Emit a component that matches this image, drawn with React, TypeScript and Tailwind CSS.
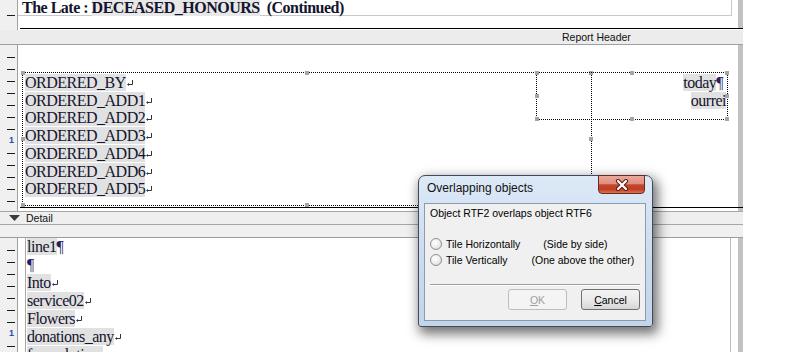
import React from "react";

const SERIF = "font-['Liberation_Serif','Times_New_Roman',serif]";
const SANS = "font-['Liberation_Sans',Arial,sans-serif]";

// left ruler, one tick every 12px, "1" marks one inch from the band
function Ruler({ count, one, pad = "pt-px" }: { count: number; one?: number; pad?: string }) {
  return (
    <div className={`w-[18px] shrink-0 overflow-hidden bg-[#f0f0f0] border-r border-[#a0a0a0] flex flex-col ${pad}`}>
      {Array.from({ length: count }).map((_, i) => (
        <div key={i} className="h-[12px] shrink-0 flex items-end">
          {i + 1 === one ? (
            <span className={`ml-[9px] text-[9px] font-bold leading-none text-[#1f50b4] translate-y-[3px] ${SANS}`}>1</span>
          ) : (
            <div className="ml-[7px] w-[8px] h-px bg-[#1a1a1a]" />
          )}
        </div>
      ))}
    </div>
  );
}

function Strip({ line = "bg-white", bar = true }: { line?: string; bar?: boolean }) {
  return (
    <div className="flex h-full">
      <div className="w-[18px] shrink-0 bg-[#f0f0f0] border-r border-[#a0a0a0]" />
      <div className="w-[2px] bg-white" />
      <div className={`flex-1 ${line}`} />
      {bar && <div className="w-[5px] bg-[#c2c2c2]" />}
    </div>
  );
}

function Ret() {
  return (
    <svg width="6" height="6" viewBox="0 0 6 6" className="inline-block align-[2px] ml-px">
      <path d="M5.5 0V4.5H1.5" fill="none" stroke="#333" strokeWidth="1" />
      <path d="M0 4.5L2 3V6Z" fill="#333" />
    </svg>
  );
}

function Handles() {
  const h = "absolute w-[4px] h-[4px] bg-[#a4a4a4]";
  return (
    <>
      <span className={`${h} -left-[2px] -top-[2px]`} />
      <span className={`${h} left-1/2 -translate-x-1/2 -top-[2px]`} />
      <span className={`${h} -right-[2px] -top-[2px]`} />
      <span className={`${h} -left-[2px] top-1/2 -translate-y-1/2`} />
      <span className={`${h} -right-[2px] top-1/2 -translate-y-1/2`} />
      <span className={`${h} -left-[2px] -bottom-[2px]`} />
      <span className={`${h} left-1/2 -translate-x-1/2 -bottom-[2px]`} />
      <span className={`${h} -right-[2px] -bottom-[2px]`} />
    </>
  );
}

function Line({ text, end }: { text: string; end: "para" | "ret" }) {
  return (
    <div className="whitespace-nowrap">
      {text && <span className="bg-[#e1e1e1]">{text}</span>}
      {end === "para" ? <span className="text-[#2b1b5e]">¶</span> : <Ret />}
    </div>
  );
}

const ordered = ["ORDERED_BY", "ORDERED_ADD1", "ORDERED_ADD2", "ORDERED_ADD3", "ORDERED_ADD4", "ORDERED_ADD6", "ORDERED_ADD5"];

const detail: { text: string; end: "para" | "ret" }[] = [
  { text: "line1", end: "para" },
  { text: "", end: "para" },
  { text: "Into", end: "ret" },
  { text: "service02", end: "ret" },
  { text: "Flowers", end: "ret" },
  { text: "donations_any", end: "ret" },
  { text: "funeral_time", end: "ret" },
];

function Radio() {
  return (
    <span className="w-[12px] h-[12px] shrink-0 rounded-full border border-[#8e8f8f] bg-[radial-gradient(circle_at_40%_35%,#ffffff_0%,#ececec_55%,#cdcdcd_100%)]" />
  );
}

function Dialog() {
  return (
    <div
      className={`absolute left-[418px] top-[175px] w-[235px] h-[152px] rounded-t-[7px] rounded-b-[3px] border border-[#3d4b5c] bg-linear-to-b from-[#dce9f7] via-[#cddcef] to-[#c3d5eb] shadow-[3px_5px_12px_2px_rgba(0,0,0,0.55)] ${SANS}`}
    >
      <div className="h-[27px] pl-[8px] pt-[4px] text-[12px] leading-[16px] text-[#111]">Overlapping objects</div>
      <div className="absolute left-[179px] -top-px w-[47px] h-[19px] rounded-b-[4px] border border-[#6a2a1c] bg-[linear-gradient(#eba89a_0%,#df8e80_45%,#c6462e_52%,#c23d24_78%,#d97552_100%)] flex items-center justify-center">
        <svg width="14" height="12" viewBox="0 0 14 12">
          <path d="M3 2L11 10M11 2L3 10" stroke="#5a1a10" strokeWidth="4.2" strokeLinecap="round" />
          <path d="M3 2L11 10M11 2L3 10" stroke="#ffffff" strokeWidth="2.2" strokeLinecap="round" />
        </svg>
      </div>
      <div className="ml-[5px] w-[222px] h-[118px] border border-[#8a9bb0] bg-[#f0f0f0] text-[10.5px] leading-[14px] text-black">
        <div className="pl-[5px] pt-[2px]">Object RTF2 overlaps object RTF6</div>
        <div className="mt-[16px] h-[16px] pl-[5px] flex items-center gap-[4px] whitespace-nowrap">
          <Radio />
          <span>Tile Horizontally</span>
          <span className="ml-[19px]">(Side by side)</span>
        </div>
        <div className="h-[16px] pl-[5px] flex items-center gap-[4px] whitespace-nowrap">
          <Radio />
          <span>Tile Vertically</span>
          <span className="ml-[20px]">(One above the other)</span>
        </div>
        <div className="mt-[16px] mx-[5px] h-px bg-[#a0a0a0]" />
        <div className="mx-[5px] h-px bg-white" />
        <div className="mt-[3px] pr-[5px] flex justify-end gap-[14px]">
          <div className="w-[59px] h-[21px] rounded-[3px] border border-[#bdbdbd] bg-[#f4f4f4] text-[#a0a0a0] flex items-center justify-center">
            <span><span className="underline">O</span>K</span>
          </div>
          <div className="w-[59px] h-[21px] rounded-[3px] border border-[#707070] bg-linear-to-b from-[#f2f2f2] via-[#ebebeb] to-[#d6d6d6] text-black flex items-center justify-center">
            <span><span className="underline">C</span>ancel</span>
          </div>
        </div>
      </div>
    </div>
  );
}

export default function App() {
  return (
    <div className="relative w-[793px] h-[352px] overflow-hidden bg-white">
      <div className="w-[743px] flex flex-col">
        {/* page header, continued from above */}
        <div className="flex h-[28px]">
          <Ruler count={1} pad="pt-[4px]" />
          <div className="flex-1 overflow-hidden">
            <div className="w-[714px] h-[16px] border-r border-b border-[#c8c8c8]">
              <div className={`pl-[4px] text-[16px] leading-[16px] font-bold tracking-[-0.5px] whitespace-pre text-[#14142e] ${SERIF}`}>
                The Late : <span className="bg-[#e8e8e8]">DECEASED_HONOURS</span>  (Continued)
              </div>
            </div>
          </div>
          <div className="w-[5px] bg-[#c2c2c2]" />
        </div>
        <div className="h-px">
          <Strip line="bg-black" bar={false} />
        </div>
        <div className="h-px">
          <Strip bar={false} />
        </div>

        {/* Report Header band */}
        <div className={`h-[15px] bg-[#ececec] border-b border-[#a0a0a0] pl-[562px] text-[10.5px] leading-[14px] text-[#111] ${SANS}`}>
          Report Header
        </div>

        <div className="flex h-[162px]">
          <Ruler count={13} one={8} />
          <div className={`flex-1 relative text-[16px] tracking-[-0.5px] text-[#14142e] ${SERIF}`}>
            <div className="absolute left-[4px] top-[27px] w-[570px] h-[134px] border border-dotted border-black pl-[2px] pt-px leading-[17.7px]">
              {ordered.map((t) => (
                <Line key={t} text={t} end="ret" />
              ))}
              <Handles />
            </div>
            <div className="absolute left-[518px] top-[27px] w-[192px] h-[48px] border border-dotted border-black pt-px leading-[17.7px] text-right overflow-visible">
              <div className="pr-[4px] whitespace-nowrap">
                <span className="bg-[#e1e1e1]">today</span>
                <span className="text-[#2b1b5e]">¶</span>
              </div>
              <div className="pr-px whitespace-nowrap">
                <span className="bg-[#e1e1e1]">ourrei</span>
              </div>
              <Handles />
            </div>
          </div>
          <div className="w-[5px] bg-[#c2c2c2]" />
        </div>

        <div className="h-px">
          <Strip line="bg-black" bar={false} />
        </div>
        <div className="h-[3px]">
          <Strip />
        </div>

        {/* Detail band */}
        <div className={`h-[14px] bg-[#efefef] border-y border-[#a6a6a6] flex items-center text-[10.5px] text-[#111] ${SANS}`}>
          <svg width="11" height="6" viewBox="0 0 11 6" className="ml-[9px]">
            <path d="M0 0H11L5.5 6Z" fill="#3c3c3c" />
          </svg>
          <span className="ml-[6px] leading-[12px]">Detail</span>
        </div>
        <div className="h-[13px] bg-[#f0f0f0] border-b border-[#9c9c9c]" />

        <div className="flex h-[114px]">
          <Ruler count={10} one={8} />
          <div className="flex-1 flex">
            <div className="w-[7px]" />
            <div className="w-px bg-[#a8a8a8]" />
            <div className={`flex-1 pl-px text-[16px] leading-[18px] tracking-[-0.5px] text-[#14142e] ${SERIF}`}>
              {detail.map((d, i) => (
                <Line key={i} text={d.text} end={d.end} />
              ))}
            </div>
            <div className="w-px bg-[#bdbdbd]" />
            <div className="w-[7px]" />
          </div>
          <div className="w-[5px] bg-[#c2c2c2]" />
        </div>
      </div>
      <Dialog />
    </div>
  );
}
